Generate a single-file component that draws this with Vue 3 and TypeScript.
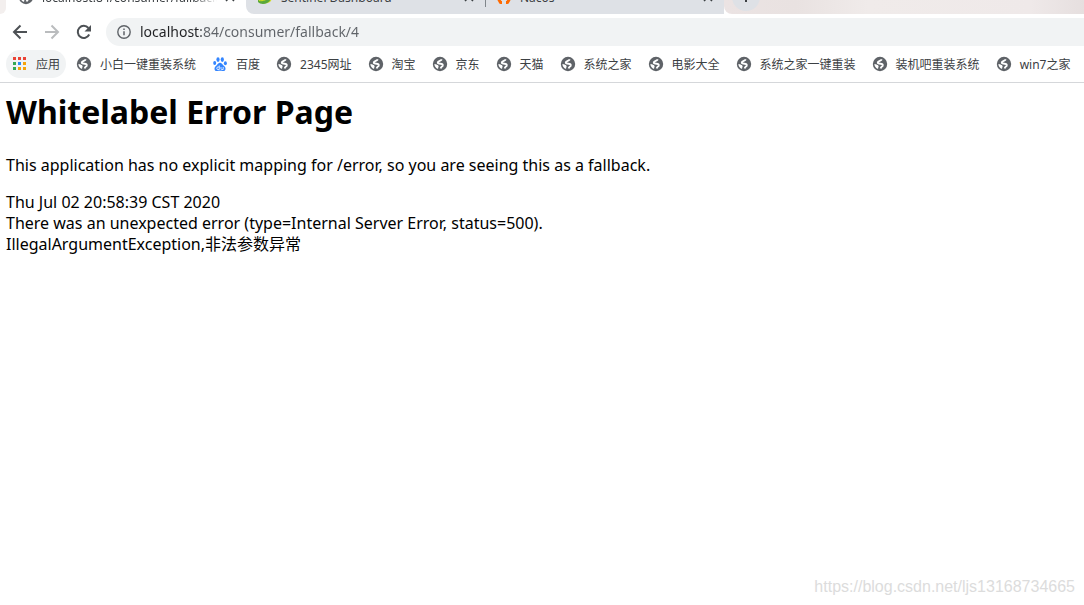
<script setup lang="ts">
import { ref } from 'vue'

interface Bookmark {
  title: string
  icon: 'apps' | 'globe' | 'paw'
}

const tabs = [
  { title: 'localhost:84/consumer/fallback/4', icon: 'globe', active: true },
  { title: 'Sentinel Dashboard', icon: 'leaf', active: false },
  { title: 'Nacos', icon: 'nacos', active: false },
]

const bookmarks: Bookmark[] = [
  { title: '应用', icon: 'apps' },
  { title: '小白一键重装系统', icon: 'globe' },
  { title: '百度', icon: 'paw' },
  { title: '2345网址', icon: 'globe' },
  { title: '淘宝', icon: 'globe' },
  { title: '京东', icon: 'globe' },
  { title: '天猫', icon: 'globe' },
  { title: '系统之家', icon: 'globe' },
  { title: '电影大全', icon: 'globe' },
  { title: '系统之家一键重装', icon: 'globe' },
  { title: '装机吧重装系统', icon: 'globe' },
  { title: 'win7之家', icon: 'globe' },
]

const appColors = ['#ea4335', '#ea4335', '#ea4335', '#34a853', '#2a8cf4', '#f5a30a', '#34a853', '#f5a30a', '#f5a30a']

const address = ref('localhost:84/consumer/fallback/4')
</script>

<template>
  <div class="browser">
    <svg class="defs" aria-hidden="true">
      <symbol id="globe" viewBox="0 0 16 16">
        <circle cx="8" cy="8" r="7.200" fill="#5f6368" />
        <path fill="none" stroke="#fff" stroke-width="1.900" stroke-linejoin="round" d="M9.800 3.400C9 5 6.200 4.600 5.800 6.200c-.3 1.400 1.200 1.500 2.700 1.500 1.700 0 2.500.9 2.200 2-.3 1-1.700 1-2 2.800" />
        <path fill="#fff" d="M2.400 8c1.800.2 4 .8 4.200 2.200.1 1-.7 1.200-.5 2.800A5.600 5.600 0 0 1 2.400 8z" />
      </symbol>
      <symbol id="paw" viewBox="0 0 16 16">
        <g fill="#3385ff">
          <ellipse cx="6" cy="3.600" rx="1.600" ry="2.300" />
          <ellipse cx="10.300" cy="3.600" rx="1.600" ry="2.300" />
          <ellipse cx="2.700" cy="7" rx="1.500" ry="2" />
          <ellipse cx="13.400" cy="7.200" rx="1.500" ry="2" />
          <path d="M8 6.800c1.700 0 2.300 1.500 3.500 2.600 1.300 1.100 2.200 2 2 3.500-.2 1.700-1.600 2.300-3 2.100-1.700-.3-3.300-.3-5 0-1.500.2-2.900-.4-3-2.100-.1-1.500.8-2.400 2-3.500C5.700 8.300 6.300 6.800 8 6.800z" />
        </g>
        <path d="M7.300 9.500v4H6a1.200 1.200 0 0 1 0-2.500h1.300M9 11v1.700c0 .5.300.8.800.8h1.400V11" fill="none" stroke="#fff" stroke-width=".8" />
      </symbol>
      <symbol id="leaf" viewBox="0 0 16 16">
        <path d="M1 3h14c1 4 0 8-2 10-3 2-9 2-12-1z" fill="#d3de22" />
        <path d="M1 11c5 1 9-1 12-5l2 1c-1 5-5 8-9 8-2 0-4-1-5-2z" fill="#59a83b" />
        <path d="M2 11.500c4 .8 8-.7 11-4.500" fill="none" stroke="#d3de22" stroke-width="1" />
      </symbol>
      <symbol id="nacos" viewBox="0 0 16 16">
        <path d="M6 2.500H4.500L1.500 8l3 5.500H6M10 2.500h1.500l3 5.500-3 5.500H10" fill="none" stroke="#ff6a00" stroke-width="3" stroke-linejoin="round" />
      </symbol>
    </svg>

    <header class="chrome">
      <div class="tab-strip">
        <div class="edge"></div>
        <div v-for="tab in tabs" :key="tab.title" class="tab" :class="{ active: tab.active, nacos: tab.icon === 'nacos' }">
          <svg class="icon"><use :href="'#' + tab.icon" /></svg>
          <span class="tab-title">{{ tab.title }}</span>
          <button class="close" type="button" aria-label="关闭">
            <svg viewBox="0 0 10 10"><path d="M1 1l8 8M9 1L1 9" stroke="#3c4043" stroke-width="1.500" /></svg>
          </button>
        </div>
        <div class="strip-rest">
          <button class="new-tab" type="button" aria-label="打开新的标签页">
            <svg viewBox="0 0 14 14"><path d="M7 1v12M1 7h12" stroke="#3c4043" stroke-width="2" /></svg>
          </button>
        </div>
      </div>

      <div class="toolbar">
        <button class="nav" type="button" aria-label="后退">
          <svg viewBox="0 0 16 16"><path d="M15 8H2M8.500 1.500L2 8l6.500 6.500" /></svg>
        </button>
        <button class="nav disabled" type="button" aria-label="前进" disabled>
          <svg viewBox="0 0 16 16"><path d="M1 8h13M7.500 1.500L14 8l-6.500 6.500" /></svg>
        </button>
        <button class="nav" type="button" aria-label="重新加载">
          <svg viewBox="0 0 16 16">
            <path d="M13.200 10.500A6 6 0 1 1 12.400 4" />
            <path class="solid" d="M15 1v6.500H8.500z" />
          </svg>
        </button>
        <label class="omnibox">
          <svg class="info" viewBox="0 0 14 14">
            <circle cx="7" cy="7" r="6.200" fill="none" stroke="#5f6368" stroke-width="1.400" />
            <path d="M7 6.200v4M7 3.500v1.500" stroke="#5f6368" stroke-width="1.500" />
          </svg>
          <input v-model="address" type="text" aria-label="地址" spellcheck="false" />
        </label>
      </div>

      <nav class="bookmarks">
        <a v-for="mark in bookmarks" :key="mark.title" href="#" class="bookmark" :class="{ apps: mark.icon === 'apps' }">
          <svg v-if="mark.icon === 'apps'" class="icon" viewBox="0 0 16 16">
            <rect v-for="(color, i) in appColors" :key="i" :x="1 + (i % 3) * 5" :y="1 + Math.floor(i / 3) * 5" width="3" height="3" :fill="color" />
          </svg>
          <svg v-else class="icon"><use :href="'#' + mark.icon" /></svg>
          <span>{{ mark.title }}</span>
        </a>
      </nav>
    </header>

    <main class="page">
      <h1>Whitelabel Error Page</h1>
      <p>This application has no explicit mapping for /error, so you are seeing this as a fallback.</p>
      <div>Thu Jul 02 20:58:39 CST 2020</div>
      <div>There was an unexpected error (type=Internal Server Error, status=500).</div>
      <div>IllegalArgumentException,非法参数异常</div>
    </main>

    <footer class="watermark">https://blog.csdn.net/ljs13168734665</footer>
  </div>
</template>

<style>
body {
  margin: 0;
  background: #fff;
}
</style>

<style scoped>
.browser {
  display: flex;
  flex-direction: column;
  min-height: 100vh;
  overflow: hidden;
  font-family: "Noto Sans", "Noto Sans CJK SC", sans-serif;
}
.defs {
  position: absolute;
  width: 0;
  height: 0;
}
button {
  padding: 0;
  border: 0;
  background: none;
}
.icon {
  flex: none;
  width: 16px;
  height: 16px;
}
.chrome {
  border-bottom: 1px solid #d5d7da;
}
.tab-strip {
  display: flex;
  align-items: flex-end;
  height: 14px;
  overflow: hidden;
  background: #fff;
}
.edge {
  width: 6px;
  height: 34px;
  background: #f3efee;
  border-bottom-right-radius: 8px;
}
.tab {
  display: flex;
  flex: none;
  align-items: center;
  box-sizing: border-box;
  width: 239px;
  height: 34px;
  padding: 0 11px;
  gap: 8px;
  background: #dee1e6;
  color: #3c4043;
  font-size: 12px;
}
.tab.active {
  width: 240px;
  padding-left: 12px;
  background: #fff;
}
.tab.active + .tab {
  border-bottom-left-radius: 8px;
}
.tab.nacos {
  background: linear-gradient(#80868b, #80868b) 0 7px / 1px 20px no-repeat #dee1e6;
}
.tab-title {
  flex: 1;
  overflow: hidden;
  white-space: nowrap;
}
.tab.active .tab-title {
  mask-image: linear-gradient(to left, transparent, #000 24px);
}
.close svg {
  display: block;
  width: 10px;
  height: 10px;
}
.strip-rest {
  display: flex;
  flex: 1;
  align-items: flex-start;
  height: 34px;
  padding-left: 8px;
  border-bottom-left-radius: 8px;
  background: linear-gradient(90deg, #ebe3e3, #e9e2e1 20%, #f0ebea 40%, #efe9e9 85%, #e6dfdf);
}
.new-tab {
  display: flex;
  align-items: center;
  justify-content: center;
  width: 28px;
  height: 31px;
  border-radius: 14px;
  background: #dee1e6;
}
.new-tab svg {
  width: 14px;
  height: 14px;
}
.toolbar {
  display: flex;
  align-items: center;
  gap: 16px;
  padding: 4px 0 4px 12px;
}
.nav svg {
  display: block;
  width: 16px;
  height: 16px;
  fill: none;
  stroke: #4d5155;
  stroke-width: 2;
}
.nav.disabled svg {
  stroke: #babcbe;
}
.nav .solid {
  fill: #4d5155;
  stroke: none;
}
.omnibox {
  display: flex;
  flex: 1;
  align-items: center;
  gap: 9px;
  height: 28px;
  margin-left: -2px;
  padding-left: 11px;
  border-radius: 14px 0 0 14px;
  background: #f1f3f4;
}
.info {
  width: 14px;
  height: 14px;
}
input {
  flex: 1;
  min-width: 0;
  padding: 0;
  border: 0;
  outline: 0;
  background: linear-gradient(90deg, #202124 61px, #5f6368 61px);
  background-clip: text;
  color: transparent;
  font: 14px/20px "Noto Sans", sans-serif;
}
.bookmarks {
  display: flex;
  gap: 4px;
  padding: 0 6px 4px;
  overflow: hidden;
}
.bookmark {
  display: flex;
  flex: none;
  align-items: center;
  gap: 8px;
  height: 28px;
  padding: 0 6px;
  border-radius: 14px;
  color: #3c4043;
  font-size: 12px;
  text-decoration: none;
  white-space: nowrap;
}
.bookmark.apps {
  background: #f1f3f4;
}
.page {
  flex: 1;
  padding: 6px;
  color: #000;
  font-size: 16px;
  line-height: 21px;
}
h1 {
  margin: 0;
  font-size: 32px;
  line-height: 46px;
}
p {
  margin: 20px 0 16px;
}
.watermark {
  padding: 0 9px 8px;
  color: #dcdcdc;
  font: 16px/20px "Liberation Sans", sans-serif;
  text-align: right;
}
</style>
